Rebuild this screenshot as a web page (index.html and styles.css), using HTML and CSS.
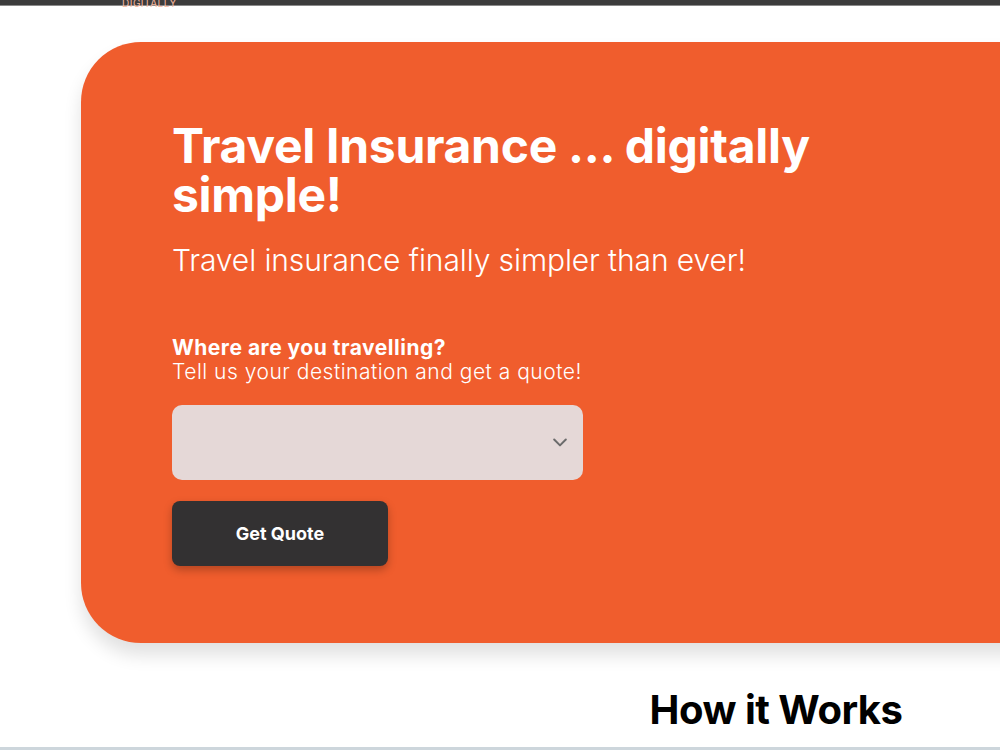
FILE: index.html
```html
<!DOCTYPE html>
<html lang="en">
<head>
    <meta charset="UTF-8">
    <meta name="viewport" content="width=device-width, initial-scale=1.0">
    <title>Travel Insurance</title>
    <link rel="stylesheet" href="styles.css">
</head>
<body>
    <div class="page">
        <header class="top-bar">
            <span class="logo-tag">DIGITALLY</span>
        </header>

        <section class="hero">
            <h1>Travel Insurance ... digitally simple!</h1>
            <p class="hero-sub">Travel insurance finally simpler than ever!</p>

            <form class="quote-form" onsubmit="return false">
                <label class="quote-label" for="destination">
                    <strong>Where are you travelling?</strong>
                    <span>Tell us your destination and get a quote!</span>
                </label>
                <div class="select-wrap">
                    <select id="destination">
                        <option value=""></option>
                    </select>
                    <svg class="chevron" width="20" height="20" viewBox="0 0 24 24" fill="none" stroke="currentColor" stroke-width="2.4" stroke-linecap="round" stroke-linejoin="round">
                        <polyline points="5 9 12 16 19 9"></polyline>
                    </svg>
                </div>
                <button class="quote-btn" type="submit">Get Quote</button>
            </form>
        </section>

        <section class="how">
            <h2>How it Works</h2>
        </section>
    </div>
    <div class="scroll-track"></div>
</body>
</html>
```

FILE: styles.css
```css
html, body {
    margin: 0;
    padding: 0;
    overflow: hidden;
    height: 100%;
}

body {
    font-family: 'Inter', 'Noto Sans', sans-serif;
    background: #fff;
    color: #111;
    position: relative;
}

.page {
    width: 1552px;
}

.top-bar {
    height: 5px;
    background: #3c3c3c;
    border-bottom: 1px solid #8a8a8a;
    position: relative;
}

.logo-tag {
    position: absolute;
    left: 122px;
    top: -3px;
    font-size: 10px;
    letter-spacing: 0.5px;
    color: #f6b8a0;
}

.hero {
    margin: 36px 81px 0;
    padding: 79px 91px 77px;
    background: #f05d2d;
    border-radius: 60px;
    box-shadow: 0 12px 18px rgba(0, 0, 0, 0.12);
    color: #fff;
}

.hero h1 {
    margin: 0;
    width: 680px;
    font-size: 48px;
    line-height: 49px;
    font-weight: 700;
    letter-spacing: -0.3px;
}

.hero-sub {
    margin: 21px 0 0;
    font-size: 30px;
    line-height: 40px;
    font-weight: 300;
    letter-spacing: -0.1px;
}

.quote-form {
    margin-top: 56px;
    width: 411px;
}

.quote-label {
    display: flex;
    flex-direction: column;
    font-size: 21px;
    line-height: 24px;
}

.quote-label strong {
    font-weight: 700;
    letter-spacing: 0.5px;
}

.quote-label span {
    font-weight: 300;
    letter-spacing: 0.5px;
    white-space: nowrap;
}

.select-wrap {
    position: relative;
    margin-top: 21px;
}

.select-wrap select {
    display: block;
    width: 100%;
    height: 75px;
    border: none;
    border-radius: 10px;
    background: #e5d8d7;
    appearance: none;
    font: inherit;
    padding: 0 20px;
}

.chevron {
    position: absolute;
    right: 13px;
    top: 27px;
    color: #6b6b6b;
    pointer-events: none;
}

.quote-btn {
    display: block;
    margin-top: 21px;
    width: 216px;
    height: 65px;
    border: none;
    border-radius: 8px;
    background: #333132;
    color: #fff;
    font-family: inherit;
    font-size: 18px;
    font-weight: 700;
    box-shadow: 0 4px 8px rgba(0, 0, 0, 0.25);
    cursor: pointer;
}

.how {
    padding-top: 42px;
    text-align: center;
}

.how h2 {
    margin: 0;
    font-size: 40px;
    font-weight: 700;
    letter-spacing: -0.5px;
    color: #000;
}

.scroll-track {
    position: absolute;
    left: 0;
    right: 0;
    bottom: 0;
    height: 3px;
    background: #cdd6dc;
}
```
